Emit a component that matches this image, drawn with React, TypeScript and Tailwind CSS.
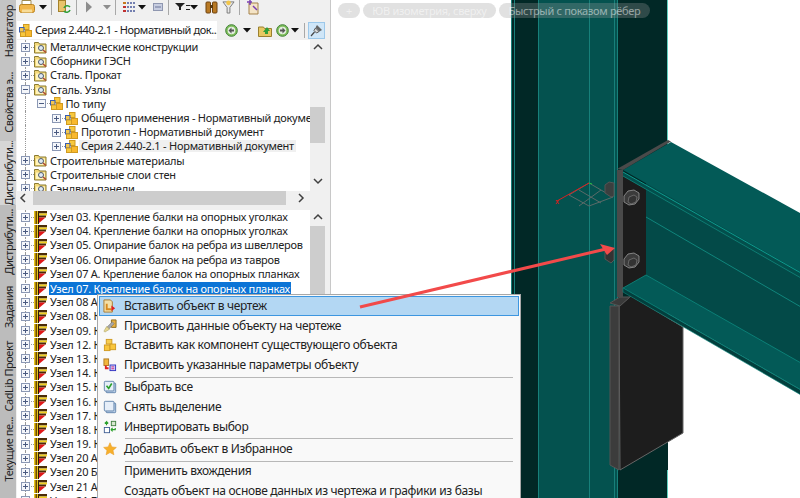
import React from "react";

const font = { fontFamily: '"Noto Sans", "Liberation Sans", sans-serif' };

function PlusBox({ minus }: { minus?: boolean }) {
  return (
    <svg width="11" height="11" viewBox="0 0 11 11" className="relative z-10 shrink-0">
      <rect x="1.500" y="1.500" width="8" height="8" fill="#f4f6fa" stroke="#8b98b4" />
      <path d="M3 5.500h5" stroke="#4a5a80" />
      {!minus && <path d="M5.500 3v5" stroke="#4a5a80" />}
    </svg>
  );
}

function FolderGlass() {
  return (
    <svg width="13" height="13" viewBox="0 0 13 13" className="shrink-0">
      <path d="M0.500 3.500V1.500h4l1 1.500h6.500V12H0.500z" fill="#f3d878" stroke="#8a7a30" />
      <path d="M2 4.500h9v6.500H2z" fill="#fff4bd" />
      <circle cx="7" cy="7" r="2.500" fill="#dfeaf5" stroke="#4d5a6b" />
      <path d="M9 9l3 2.500" stroke="#b04a30" strokeWidth="1.600" />
    </svg>
  );
}

function Cubes() {
  return (
    <svg width="13" height="13" viewBox="0 0 13 13" className="shrink-0">
      <rect x="4.500" y="0.500" width="5.500" height="5" fill="#f7c83e" stroke="#d09a20" />
      <rect x="0.500" y="3.500" width="4.500" height="4.500" fill="#f3c850" stroke="#3a5fb0" />
      <rect x="6.500" y="6.500" width="6" height="6" fill="#f9b82c" stroke="#d09a20" />
      <rect x="1.500" y="8" width="5" height="4.500" fill="#f7c83e" stroke="#d09a20" />
    </svg>
  );
}

function NodeIcon() {
  return (
    <svg width="13" height="13" viewBox="0 0 13 13" className="shrink-0">
      <rect x="0" y="0" width="4.500" height="13" fill="#e8c41a" />
      <rect x="1.500" y="0" width="1.500" height="13" fill="#6a4a08" />
      <rect x="4" y="0" width="1" height="13" fill="#2a1a08" />
      <rect x="4.500" y="0" width="8.500" height="2.500" fill="#4a2c08" />
      <rect x="5" y="2.500" width="8" height="2" fill="#f1d020" />
      <rect x="5" y="4.500" width="7" height="2" fill="#4a2c08" />
      <path d="M5 6.500h6.500L5 12z" fill="#e01818" />
    </svg>
  );
}

function Drop() {
  return (
    <svg width="8" height="5" viewBox="0 0 8 5" className="shrink-0">
      <path d="M0 0h8L4 4.500z" fill="#111" />
    </svg>
  );
}

function VSep() {
  return <div className="h-[15px] w-px shrink-0 bg-[#a8a8a8]" />;
}

function GreenArrow({ right }: { right?: boolean }) {
  return (
    <svg width="13" height="13" viewBox="0 0 13 13" className="shrink-0">
      <circle cx="6.500" cy="6.500" r="5.800" fill="#7fbf5c" stroke="#3f7f34" />
      <circle cx="6.500" cy="6.500" r="3.800" fill="#e4eee0" />
      <path d={right ? "M4 5.500h2.500V3.500L9.500 6.500l-3 3v-2H4z" : "M9 5.500H6.500V3.500L3.500 6.500l3 3v-2H9z"} fill="#555" />
    </svg>
  );
}

function Chevron({ dir }: { dir: "up" | "down" | "left" | "right" }) {
  const d = { up: "M2 7l4-4 4 4", down: "M2 4l4 4 4-4", left: "M7 2L3 6l4 4", right: "M4 2l4 4-4 4" }[dir];
  return (
    <svg width="12" height="12" viewBox="0 0 12 12" className="shrink-0">
      <path d={d} fill="none" stroke="#404040" strokeWidth="1.500" />
    </svg>
  );
}

function Toolbar() {
  return (
    <div className="flex h-[20px] items-center bg-[#f0f0f0] pb-[6px]">
      <svg width="16" height="14" viewBox="0 0 16 14" className="ml-[3px] shrink-0">
        <path d="M3 0.500h9v4H3z" fill="#fff" stroke="#a08a50" />
        <rect x="0.500" y="4.500" width="15" height="8" rx="2" fill="#f1b64c" stroke="#b98320" />
        <rect x="3" y="9.500" width="10" height="3" fill="#f8dc98" />
      </svg>
      <div className="ml-[4px]"><Drop /></div>
      <div className="ml-[4px]"><VSep /></div>
      <svg width="13" height="15" viewBox="0 0 13 15" className="ml-[6px] shrink-0">
        <rect x="0.500" y="0.500" width="7" height="11" fill="#e8c36a" stroke="#a5822c" />
        <path d="M6 8a3.500 3.500 0 0 1 6-1M12 10a3.500 3.500 0 0 1-6 1" fill="none" stroke="#2f9f3a" strokeWidth="1.600" />
      </svg>
      <div className="ml-[5px]"><VSep /></div>
      <svg width="8" height="12" viewBox="0 0 8 12" className="ml-[8px] shrink-0">
        <path d="M1 0.500l6 5.500-6 5.500z" fill="#8d8d8d" />
      </svg>
      <svg width="8" height="5" viewBox="0 0 8 5" className="ml-[10px] shrink-0">
        <path d="M0 0h8L4 4.500z" fill="#8d8d8d" />
      </svg>
      <div className="ml-[4px]"><VSep /></div>
      <svg width="14" height="11" viewBox="0 0 14 11" className="ml-[6px] shrink-0">
        <path d="M5 1h8M5 5h8M5 9h8" stroke="#4a5a9a" strokeWidth="1.500" strokeDasharray="2 1" />
        <path d="M1 1h3" stroke="#c77a20" strokeWidth="2" />
        <path d="M1 5h3M1 9h3" stroke="#c03030" strokeWidth="2" />
      </svg>
      <div className="ml-[2px]"><Drop /></div>
      <svg width="10" height="8" viewBox="0 0 10 8" className="ml-[7px] shrink-0">
        <rect x="0.500" y="0.500" width="9" height="7" fill="#c7cde0" stroke="#8f97b0" />
        <path d="M2 4h6" stroke="#6d769a" />
      </svg>
      <div className="ml-[5px]"><VSep /></div>
      <svg width="10" height="8" viewBox="0 0 10 8" className="ml-[6px] shrink-0">
        <path d="M0 0h10L6 4v3H4V4z" fill="#222" />
      </svg>
      <div className="ml-[1px] h-[5px] w-[4px] border-y border-[#222]" />
      <div className="ml-[0px]"><Drop /></div>
      <svg width="13" height="13" viewBox="0 0 13 13" className="ml-[7px] shrink-0">
        <rect x="1" y="1" width="4.500" height="11" rx="1" fill="#b97a24" stroke="#6f4310" />
        <rect x="7.500" y="1" width="4.500" height="11" rx="1" fill="#b97a24" stroke="#6f4310" />
        <rect x="5" y="4" width="3" height="3" fill="#5a3a10" />
      </svg>
      <svg width="13" height="14" viewBox="0 0 14 15" className="ml-[4px] shrink-0">
        <path d="M1 2h12L8.500 8v6h-3V8z" fill="#e8e8e8" stroke="#777" />
        <circle cx="7" cy="3" r="2.500" fill="#f2c64a" />
      </svg>
      <div className="ml-[4px]"><VSep /></div>
      <svg width="14" height="15" viewBox="0 0 14 15" className="ml-[6px] shrink-0">
        <path d="M3 3h9v11H3z" fill="#f4e4c6" stroke="#a5824a" />
        <path d="M1 2h5M4 0v5M7 6l4 4" stroke="#7a3fb0" strokeWidth="1.500" />
      </svg>
    </div>
  );
}

function ComboRow() {
  return (
    <div className="flex h-[20px] items-center bg-[#f0f0f0]">
      <div className="ml-[1px] flex h-[18px] w-[201px] items-center gap-[3px] overflow-hidden bg-white pl-[2px] text-[11px] leading-none tracking-[-0.42px] text-[#222]">
        <Cubes />
        <span className="whitespace-nowrap pb-[1px]">Серия 2.440-2.1 - Нормативный док...</span>
      </div>
      <div className="ml-[8px]"><GreenArrow /></div>
      <div className="ml-[5px]"><Drop /></div>
      <svg width="14" height="13" viewBox="0 0 14 13" className="ml-[7px] shrink-0">
        <path d="M0.500 3h5l1 1.500h7V12.500H0.500z" fill="#e8c862" stroke="#9a8030" />
        <path d="M5 8l4-5 3 4-2 0v3H7V8z" fill="#2f9f3a" />
      </svg>
      <div className="ml-[4px]"><GreenArrow right /></div>
      <div className="ml-[2px]"><Drop /></div>
      <div className="ml-[5px]"><VSep /></div>
      <div className="ml-[3px] flex h-[17px] w-[17px] items-center justify-center border border-[#9cc8ea] bg-[#cfe6f8]">
        <svg width="13" height="13" viewBox="0 0 13 13">
          <path d="M7 1l5 5-2.500 1.500-4-4z" fill="#666" />
          <path d="M5.500 4L9 7.500 6.500 9 4 6.500z" fill="#d8d8d8" stroke="#555" />
          <path d="M4.500 8L1 12" stroke="#444" strokeWidth="1.200" />
        </svg>
      </div>
    </div>
  );
}

type TreeRow = { text: string; level: number; icon: "folder" | "cubes"; open?: boolean; soft?: boolean };

const upper: TreeRow[] = [
  { text: "Металлические конструкции", level: 0, icon: "folder" },
  { text: "Сборники ГЭСН", level: 0, icon: "folder" },
  { text: "Сталь. Прокат", level: 0, icon: "folder" },
  { text: "Сталь. Узлы", level: 0, icon: "folder", open: true },
  { text: "По типу", level: 1, icon: "cubes", open: true },
  { text: "Общего применения - Нормативный документ", level: 2, icon: "cubes" },
  { text: "Прототип - Нормативный документ", level: 2, icon: "cubes" },
  { text: "Серия 2.440-2.1 - Нормативный документ", level: 2, icon: "cubes", soft: true },
  { text: "Строительные материалы", level: 0, icon: "folder" },
  { text: "Строительные слои стен", level: 0, icon: "folder" },
  { text: "Сэндвич-панели", level: 0, icon: "folder" },
];

const lower = [
  "Узел 03. Крепление балки на опорных уголках",
  "Узел 04. Крепление балки на опорных уголках",
  "Узел 05. Опирание балок на ребра из швеллеров",
  "Узел 06. Опирание балок на ребра из тавров",
  "Узел 07 А. Крепление балок на опорных планках",
  "Узел 07. Крепление балок на опорных планках",
  "Узел 08 А. Крепление балок",
  "Узел 08. Крепление балок",
  "Узел 09. Крепление балок",
  "Узел 12. Крепление балок",
  "Узел 13. Крепление балок",
  "Узел 14. Крепление балок",
  "Узел 15. Крепление балок",
  "Узел 16. Крепление балок",
  "Узел 17. Крепление балок",
  "Узел 18. Крепление балок",
  "Узел 19. Крепление балок",
  "Узел 20 А. Крепление балок",
  "Узел 20 Б. Крепление балок",
  "Узел 21 А. Крепление балок",
  "Узел 21 Б. Крепление балок",
];

function UpperTree() {
  return (
    <div className="ml-[1px] h-[151px] flex-1 overflow-hidden bg-white text-[11px] leading-none tracking-[-0.24px] text-[#222]">
      {upper.map((r) => (
        <div key={r.text} className="relative flex h-[14.2px] items-center whitespace-nowrap" style={{ paddingLeft: 3 + r.level * 15.5 }}>
          <div className="absolute left-[8px] top-0 h-full border-l border-dotted border-[#999]" />
          <PlusBox minus={r.open} />
          <div className="w-[3px] shrink-0 border-t border-dotted border-[#999]" />
          {r.icon === "folder" ? <FolderGlass /> : <Cubes />}
          <span className={r.soft ? "ml-[1px] bg-[#f0f0f0] px-[2px] pb-[1px]" : "ml-[3px] pb-[1px]"}>{r.text}</span>
        </div>
      ))}
    </div>
  );
}

function LowerList() {
  return (
    <div className="ml-[1px] flex-1 overflow-hidden bg-white text-[11px] leading-none tracking-[-0.24px] text-[#222]">
      {lower.map((t, i) => (
        <div key={t} className="relative flex h-[14.2px] items-center whitespace-nowrap pl-[3px]">
          <div className="absolute left-[8px] top-0 h-full border-l border-dotted border-[#999]" />
          <PlusBox />
          <div className="w-[3px] shrink-0 border-t border-dotted border-[#999]" />
          <NodeIcon />
          <span className={i === 5 ? "ml-[2px] bg-[#0c74d6] px-[1px] py-[1px] text-white" : "ml-[3px] pb-[1px]"}>{t}</span>
        </div>
      ))}
    </div>
  );
}

function Sidebar() {
  const tabs: [string, number, string][] = [
    ["Навигатор", 63, "#c4c4c4"],
    ["Свойства э...", 78, "#c4c4c4"],
    ["Дистрибути...", 64, "#d6d6d6"],
    ["Дистрибути...", 73, "#bcbcbc"],
    ["Задания", 59, "#bcbcbc"],
    ["CadLib Проект", 79, "#bcbcbc"],
    ["Текущие пе...", 66, "#bcbcbc"],
  ];
  return (
    <div className="flex w-[16px] shrink-0 flex-col bg-[#bcbcbc]">
      {tabs.map(([t, h, c], i) => (
        <div key={i} className="flex w-full shrink-0 items-center justify-center overflow-hidden" style={{ height: h, backgroundColor: c }}>
          <span className="rotate-180 whitespace-nowrap text-[11px] leading-none tracking-[-0.45px] text-[#222] [writing-mode:vertical-rl]">{t}</span>
        </div>
      ))}
    </div>
  );
}

function Panel() {
  return (
    <div className="flex w-[309px] shrink-0 flex-col bg-[#f0f0f0]">
      <Toolbar />
      <ComboRow />
      <div className="flex h-[151px]">
        <UpperTree />
        <div className="flex w-[15px] shrink-0 flex-col items-center bg-[#f0f0f0]">
          <div className="flex h-[14px] items-center pt-[1px]"><Chevron dir="up" /></div>
          <div className="mt-[53px] h-[36px] w-full bg-[#cdcdcd]" />
          <div className="mt-[32px]"><Chevron dir="down" /></div>
        </div>
      </div>
      <div className="flex h-[14px] items-center bg-[#f0f0f0]">
        <div className="ml-[2px]"><Chevron dir="left" /></div>
        <div className="ml-[3px] h-full w-[253px] bg-[#cdcdcd]" />
        <div className="ml-[9px]"><Chevron dir="right" /></div>
      </div>
      <div className="h-[5px]" />
      <div className="flex flex-1 overflow-hidden">
        <LowerList />
        <div className="flex w-[15px] shrink-0 flex-col items-center bg-[#f0f0f0]">
          <div className="flex h-[16px] items-center"><Chevron dir="up" /></div>
          <div className="h-[240px] w-full bg-[#cdcdcd]" />
        </div>
      </div>
    </div>
  );
}

function Drawing() {
  return (
    <svg width="470" height="498" viewBox="330 0 470 498" className="absolute inset-0">
      <rect x="510" y="0" width="157" height="498" fill="#012826" />
      <rect x="537" y="0" width="79" height="498" fill="#04524f" />
      <g stroke="#17807a" strokeWidth="1">
        <path d="M510.500 0v498M513.500 0v498M537.500 0v498M588.500 0v498M613.500 0v498M616.500 0v498" />
      </g>
      <path d="M666.500 0v145M666.500 470v28" stroke="#5fd0c0" />
      {/* UCS */}
      <g fill="none" strokeWidth="1">
        <path d="M568 195l20-12 24 14-24 9zM578 190l22 13M600 190l-22 16" stroke="#5a6a68" />
        <path d="M588 183l-32 18" stroke="#d82020" />
        <path d="M555 200l3 4M558 200l-3 4" stroke="#d82020" />
        <path d="M588 183l3 1" stroke="#20c040" />
      </g>
      {/* back bolts */}
      <path d="M604 185l4-3 5 1v13l-3 1-6-4z" fill="#3a3f3f" stroke="#555" />
      <path d="M604 252l9-4v12l-3 3-6-4z" fill="#333" stroke="#555" />
      {/* lower plate */}
      <path d="M618 306l12-10 52 31v106l-63 37z" fill="#1d1d1d" stroke="#666" />
      <path d="M609 306l9 0v164l-9-5z" fill="#3c3c3c" stroke="#555" />
      <path d="M609 303l10-6 10 0-10 9z" fill="#3a3a3a" stroke="#555" />
      {/* end plate */}
      <path d="M622 172l23 14v90l-23 14z" fill="#1c1c1c" />
      <path d="M616 170h6v127h-6z" fill="#4a4a4a" />
      {/* web */}
      <path d="M645 180l155 90v95l-155-89z" fill="#034a48" />
      <path d="M645 217l155 90" stroke="#10857c" fill="none" />
      {/* top flange */}
      <path d="M622 170l48-28 130 71.500v59z" fill="#035a57" />
      <path d="M622 172l178 101v5l-178-102z" fill="#034f4c" />
      <path d="M622 172l178 101" stroke="#0e9a8e" fill="none" />
      <path d="M622 176l178 102" stroke="#0e7c73" fill="none" />
      <path d="M616 169l51-29 3 1.500-48 28.500z" fill="#4a4a4a" />
      {/* bottom flange */}
      <path d="M622 288l23-13 155 88v27z" fill="#035a57" stroke="#0e8a80" strokeWidth="0.800" />
      <path d="M622 288v4l178 103v-5z" fill="#023f3d" stroke="#0e8a80" strokeWidth="0.600" />
      {/* bolts */}
      {[200, 263].map((y) => (
        <g key={y}>
          <path d={`M623 ${y - 4}l4-5 6-1 5 3 0 6-4 5-6 1-5-3z`} fill="#3b3b3b" stroke="#999" strokeWidth="0.800" />
          <path d={`M628 ${y - 3}l5-2 3 2-1 5-5 2-3-2z`} fill="#333" stroke="#888" strokeWidth="0.600" />
        </g>
      ))}
    </svg>
  );
}

function Pills() {
  const pill = "flex h-[15px] items-center rounded-full bg-[#9a9a9a]/30 text-[11px] leading-none tracking-[-0.3px] text-white/50";
  return (
    <div className="relative z-10 flex gap-[3px] pl-[7px] pt-[3px]">
      <div className={`${pill} w-[22px] justify-center`}>+</div>
      <div className={`${pill} w-[133px] justify-center whitespace-nowrap`}>ЮВ изометрия, сверху</div>
      <div className={`${pill} w-[151px] justify-center whitespace-nowrap`}>Быстрый с показом рёбер</div>
    </div>
  );
}

function MenuIcon({ n }: { n: number }) {
  switch (n) {
    case 0:
      return (
        <svg width="14" height="14" viewBox="0 0 15 15">
          <path d="M1 1h7l2 2v11H1z" fill="#f3dfa8" stroke="#a9782c" />
          <path d="M4 5v6h5" fill="none" stroke="#d88a20" strokeWidth="2" />
          <path d="M9 7l4 3-4 3z" fill="#e02020" />
        </svg>
      );
    case 1:
      return (
        <svg width="14" height="14" viewBox="0 0 15 15">
          <path d="M9 1h5v8H9z" fill="#e8b040" stroke="#8a6a20" />
          <path d="M10 3L4 9l2 2 6-6z" fill="#a8a8a8" stroke="#707070" strokeWidth="0.600" />
          <path d="M1 13l3-5 3 3-5 3z" fill="#e8d890" stroke="#a8a060" strokeWidth="0.600" />
        </svg>
      );
    case 2:
      return (
        <svg width="14" height="14" viewBox="0 0 15 15">
          <rect x="3.500" y="1.500" width="6" height="5" fill="#f7cc50" stroke="#d09a20" />
          <rect x="1.500" y="7.500" width="6" height="6" fill="#f9c63c" stroke="#d09a20" />
          <rect x="7.500" y="6.500" width="6" height="6" fill="#f9c63c" stroke="#d09a20" />
        </svg>
      );
    case 3:
      return (
        <svg width="14" height="14" viewBox="0 0 15 15">
          <rect x="1" y="1" width="5" height="7" fill="#f2b63c" stroke="#b07a20" />
          <path d="M3 8v3h3" fill="none" stroke="#e02020" strokeWidth="2" />
          <rect x="7.500" y="7.500" width="6" height="6" fill="#c8d8f8" stroke="#3030c0" />
          <path d="M9 9.500h3M9 11.500h3" stroke="#e02080" />
        </svg>
      );
    case 4:
      return (
        <svg width="14" height="14" viewBox="0 0 16 16">
          <rect x="3.500" y="3.500" width="11" height="11" rx="1" fill="#bcd0e8" stroke="#5a7fa8" />
          <rect x="1.500" y="1.500" width="11" height="11" rx="1" fill="#e6eef8" stroke="#5a7fa8" />
          <path d="M4 6.500l2.500 3L10 4" fill="none" stroke="#2aa02a" strokeWidth="1.800" />
        </svg>
      );
    case 5:
      return (
        <svg width="14" height="14" viewBox="0 0 16 16">
          <rect x="3.500" y="3.500" width="11" height="11" rx="1" fill="#bcd0e8" stroke="#5a7fa8" />
          <rect x="1.500" y="1.500" width="11" height="11" rx="1" fill="#e6eef8" stroke="#5a7fa8" />
        </svg>
      );
    case 6:
      return (
        <svg width="14" height="14" viewBox="0 0 16 16">
          <rect x="1.500" y="8.500" width="6" height="6" fill="#fff" stroke="#3a5a90" />
          <rect x="9.500" y="1.500" width="5" height="5" fill="#d8e8d0" stroke="#3a7a3a" />
          <path d="M4 6V2l-2 2M4 2l2 2" fill="none" stroke="#2aa02a" strokeWidth="1.300" />
          <path d="M9 11h5v-2M9 11l2-2M9 11l2 2" fill="none" stroke="#2aa02a" strokeWidth="1.300" />
        </svg>
      );
    default:
      return (
        <svg width="14" height="14" viewBox="0 0 15 15">
          <path d="M7.500 0.800l2 4.500 4.800.5-3.600 3.200 1 4.700-4.200-2.400-4.200 2.400 1-4.700L.7 5.800l4.800-.5z" fill="#f7b02c" stroke="#e89a20" strokeWidth="0.600" />
        </svg>
      );
  }
}

function MenuRow({ text, icon, active }: { text: string; icon?: number; active?: boolean }) {
  return (
    <div className={`flex h-[19.8px] items-center text-[12px] leading-none tracking-[-0.32px] text-[#222] ${active ? "border border-[#3d96e0] bg-[#b3d7f3]" : "border border-transparent"}`}>
      <div className="flex w-[20px] shrink-0 justify-center">{icon !== undefined && <MenuIcon n={icon} />}</div>
      <span className="ml-[4px] whitespace-nowrap">{text}</span>
    </div>
  );
}

function MenuSep() {
  return <div className="ml-[26px] mr-[6px] h-[2.4px] border-b border-[#b8b8b8]" />;
}

function ContextMenu() {
  return (
    <div className="absolute left-[97px] top-[294px] z-20 h-[210px] w-[424px] border border-[#a8a8a8] bg-[#f9f9f9] p-[1px]">
      <MenuRow text="Вставить объект в чертеж" icon={0} active />
      <MenuRow text="Присвоить данные объекту на чертеже" icon={1} />
      <MenuRow text="Вставить как компонент существующего объекта" icon={2} />
      <MenuRow text="Присвоить указанные параметры объекту" icon={3} />
      <MenuSep />
      <MenuRow text="Выбрать все" icon={4} />
      <MenuRow text="Снять выделение" icon={5} />
      <MenuRow text="Инвертировать выбор" icon={6} />
      <MenuSep />
      <MenuRow text="Добавить объект в Избранное" icon={7} />
      <MenuSep />
      <MenuRow text="Применить вхождения" />
      <MenuRow text="Создать объект на основе данных из чертежа и графики из базы" />
    </div>
  );
}

export default function App() {
  return (
    <div className="relative flex h-[498px] w-[800px] overflow-hidden bg-white" style={font}>
      <Sidebar />
      <Panel />
      <div className="w-[5px] shrink-0 bg-[#f0f0f0]" />
      <div className="relative flex-1 overflow-hidden border-l border-[#c8c8c8] bg-white">
        <Drawing />
        <Pills />
      </div>
      <ContextMenu />
      <svg width="800" height="498" viewBox="0 0 800 498" className="pointer-events-none absolute inset-0 z-30">
        <path d="M360 307L606 249" stroke="#f24a4a" strokeWidth="3" />
        <path d="M615 248L600 244l4 6.500 3 4.500z" fill="#f24a4a" />
      </svg>
    </div>
  );
}
